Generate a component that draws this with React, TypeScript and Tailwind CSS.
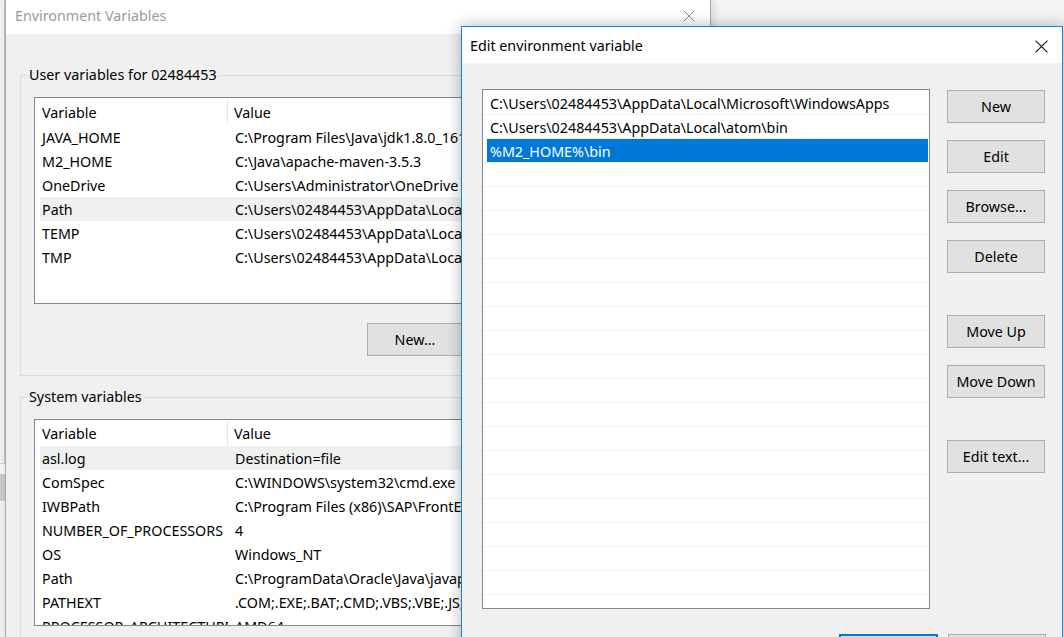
import React from 'react';

type Row = { name: string; value: string; hot?: boolean };

const userVars: Row[] = [
  { name: 'JAVA_HOME', value: 'C:\\Program Files\\Java\\jdk1.8.0_161' },
  { name: 'M2_HOME', value: 'C:\\Java\\apache-maven-3.5.3' },
  { name: 'OneDrive', value: 'C:\\Users\\Administrator\\OneDrive' },
  { name: 'Path', value: 'C:\\Users\\02484453\\AppData\\Local\\Microsoft\\WindowsApps;', hot: true },
  { name: 'TEMP', value: 'C:\\Users\\02484453\\AppData\\Local\\Temp' },
  { name: 'TMP', value: 'C:\\Users\\02484453\\AppData\\Local\\Temp' },
];

const systemVars: Row[] = [
  { name: 'asl.log', value: 'Destination=file', hot: true },
  { name: 'ComSpec', value: 'C:\\WINDOWS\\system32\\cmd.exe' },
  { name: 'IWBPath', value: 'C:\\Program Files (x86)\\SAP\\FrontEnd\\SAPgui\\' },
  { name: 'NUMBER_OF_PROCESSORS', value: '4' },
  { name: 'OS', value: 'Windows_NT' },
  { name: 'Path', value: 'C:\\ProgramData\\Oracle\\Java\\javapath;C:\\WINDOWS\\system32' },
  { name: 'PATHEXT', value: '.COM;.EXE;.BAT;.CMD;.VBS;.VBE;.JS;.JSE;.WSF;.WSH;.MSC' },
  { name: 'PROCESSOR_ARCHITECTURE', value: 'AMD64' },
];

const paths = [
  'C:\\Users\\02484453\\AppData\\Local\\Microsoft\\WindowsApps',
  'C:\\Users\\02484453\\AppData\\Local\\atom\\bin',
  '%M2_HOME%\\bin',
];

const CloseX = ({ color, size }: { color: string; size: number }) => (
  <svg width={size} height={size} viewBox="0 0 12 12" fill="none">
    <path d="M0.5 0.5L11.5 11.5M11.5 0.5L0.5 11.5" stroke={color} strokeWidth="1" />
  </svg>
);

const VarList = ({ rows, headerH }: { rows: Row[]; headerH: string }) => (
  <div className="h-[207px] w-[655px] overflow-hidden border border-[#828790] bg-white">
    <div className={`flex ${headerH}`}>
      <div className="my-[1px] flex w-[193px] items-center border-r border-[#e5e5e5] pl-[7px] pt-[2px]">Variable</div>
      <div className="flex items-center pl-[6px] pt-[2px]">Value</div>
    </div>
    {rows.map(r => (
      <div key={r.name} className={`ml-[5px] flex h-[24px] items-center pt-[2px] ${r.hot ? 'bg-[#f0f0f0]' : ''}`}>
        <div className="w-[188px] overflow-hidden whitespace-nowrap pl-[2px]">{r.name}</div>
        <div className="whitespace-nowrap pl-[7px]">{r.value}</div>
      </div>
    ))}
  </div>
);

const WinButton = ({ label, className = '' }: { label: string; className?: string }) => (
  <div className={`flex h-[33px] items-center justify-center border border-[#adadad] bg-[#e1e1e1] ${className}`}>
    {label}
  </div>
);

const BackWindow = () => (
  <div className="absolute left-[5px] top-0 flex h-[637px] w-[706px] flex-col border-l border-r border-[#aaaaaa] shadow-[2px_0_8px_rgba(0,0,0,0.12)]">
    <div className="flex h-[34px] shrink-0 items-center justify-between bg-white pb-[3px] pl-[9px] pr-[15px] text-[#9a9a9a]">
      <span>Environment Variables</span>
      <CloseX color="#8a8a8a" size={12} />
    </div>
    <div className="flex-1 bg-[#f0f0f0]">
      <fieldset className="ml-[14px] mt-[31px] h-[311px] w-[680px] border border-[#dcdcdc]">
        <legend className="ml-[6px] px-[2px] leading-[20px]">User variables for 02484453</legend>
        <div className="ml-[13px] mt-[12px]">
          <VarList rows={userVars} headerH="h-[27px]" />
        </div>
        <div className="ml-[346px] mt-[19px] flex gap-[8px]">
          <WinButton label="New..." className="w-[96px]" />
          <WinButton label="Edit..." className="w-[96px]" />
          <WinButton label="Delete" className="w-[96px]" />
        </div>
      </fieldset>
      <fieldset className="ml-[14px] mt-[11px] h-[400px] w-[680px] border border-[#dcdcdc]">
        <legend className="ml-[6px] px-[2px] leading-[20px]">System variables</legend>
        <div className="ml-[13px] mt-[12px]">
          <VarList rows={systemVars} headerH="h-[26px]" />
        </div>
      </fieldset>
    </div>
  </div>
);

const EditDialog = () => {
  const rowCount = 22;
  return (
    <div className="absolute left-[461px] top-[26px] flex h-[640px] w-[602px] flex-col border border-[#1883d7] bg-[#f0f0f0] shadow-[0_0_14px_rgba(0,0,0,0.3)]">
      <div className="flex h-[36px] shrink-0 items-center justify-between bg-white pl-[8px] pt-[2px]">
        <span>Edit environment variable</span>
        <div className="flex w-[42px] items-center justify-center">
          <CloseX color="#111111" size={13} />
        </div>
      </div>
      <div className="flex pl-[20px] pt-[26px]">
        <div className="h-[520px] w-[448px] overflow-hidden border border-[#828790] bg-white pt-[1px]">
          {Array.from({ length: rowCount }).map((_, i) => {
            const text = paths[i] ?? '';
            const selected = i === 2;
            return (
              <div key={i} className="mx-[1px] flex h-[24px] border-b border-[#f0f0f0]">
                <div
                  className={`ml-[3px] flex flex-1 items-center whitespace-nowrap pl-[3px] pt-[2px] ${
                    selected ? 'bg-[#0078d7] text-white' : ''
                  }`}
                >
                  {text}
                </div>
              </div>
            );
          })}
        </div>
        <div className="ml-[17px] mt-[1px] flex w-[98px] flex-col">
          <WinButton label="New" />
          <WinButton label="Edit" className="mt-[17px]" />
          <WinButton label="Browse..." className="mt-[17px]" />
          <WinButton label="Delete" className="mt-[17px]" />
          <WinButton label="Move Up" className="mt-[42px]" />
          <WinButton label="Move Down" className="mt-[17px]" />
          <WinButton label="Edit text..." className="mt-[42px]" />
        </div>
      </div>
      <div className="mt-[25px] flex justify-end gap-[10px] pr-[16px]">
        <div className="flex h-[33px] w-[99px] items-center justify-center border-2 border-[#0078d7] bg-[#e1e1e1]">OK</div>
        <WinButton label="Cancel" className="w-[98px]" />
      </div>
    </div>
  );
};

export default function App() {
  return (
    <div className="relative h-[637px] w-[1064px] overflow-hidden bg-[#f3f3f3] font-['Noto_Sans',sans-serif] text-[14.3px] text-black">
      <div className="absolute left-0 top-0 flex h-[637px] w-[5px] flex-col">
        <div className="h-[463px] border-r border-[#c4c4c4] bg-[#f0f0f0]" />
        <div className="h-[12px] border-y border-[#d0d0d0] bg-[#f4f4f4]" />
        <div className="h-[25px] bg-[#c9c9c9]" />
        <div className="flex-1 border-t border-[#d0d0d0] bg-[#f0f0f0]" />
      </div>
      <BackWindow />
      <EditDialog />
    </div>
  );
}
